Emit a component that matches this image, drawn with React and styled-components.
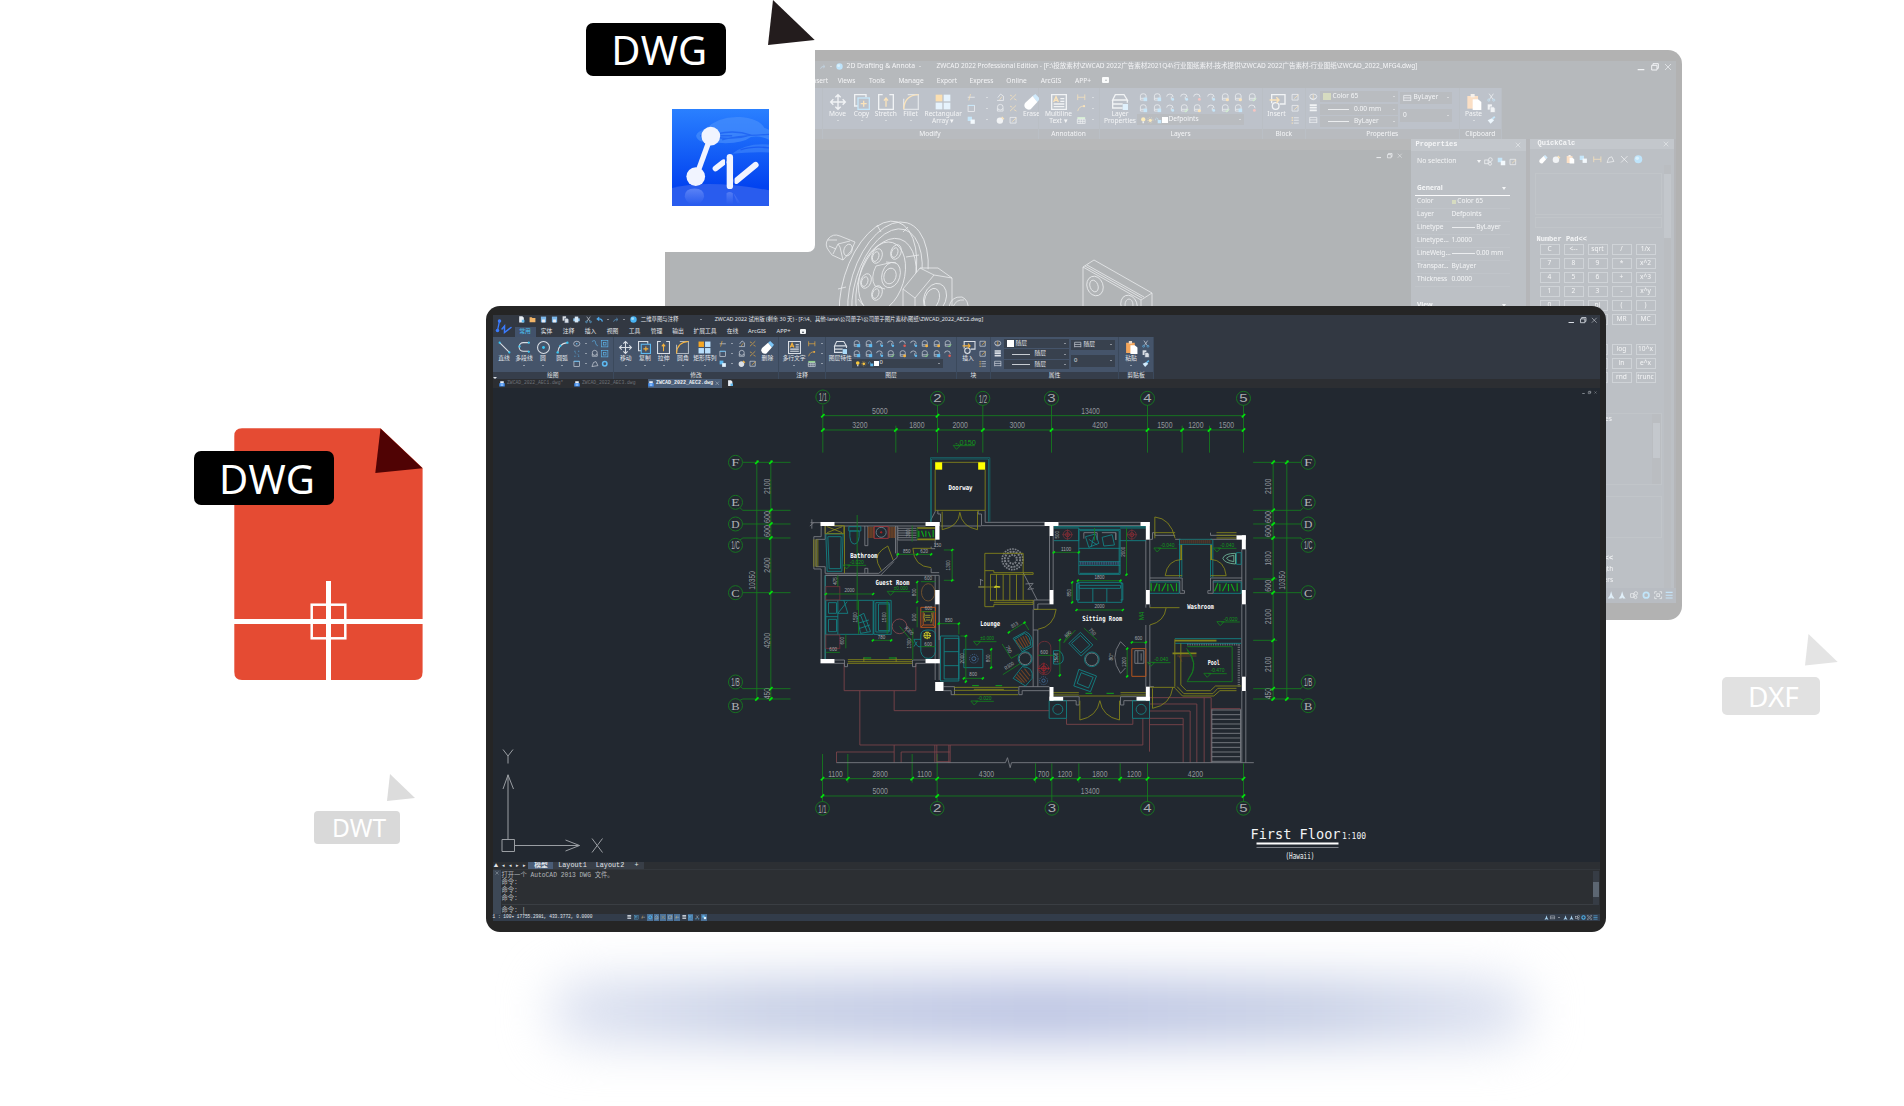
import React from "react";
import styled, { createGlobalStyle } from "styled-components";

const Global = createGlobalStyle`
  * { box-sizing: border-box; }
  html, body { margin: 0; padding: 0; background: #fff; }
`;

const UI = `"Noto Sans", "Noto Sans CJK SC", sans-serif`;
const MONO = `"Liberation Mono", "Noto Sans CJK SC", monospace`;
const PLAN = `"DejaVu Sans Mono", monospace`;

/* ---------- scene ---------- */
const Scene = styled.main`
  position: relative;
  width: 1904px;
  height: 1106px;
  overflow: hidden;
  background: #fff;
  font-family: ${UI};
`;
const Placed = styled.div`
  position: absolute;
  left: ${(p) => p.$x}px;
  top: ${(p) => p.$y}px;
`;
const Tag = styled.div`
  width: ${(p) => p.$w}px;
  height: ${(p) => p.$h}px;
  border-radius: ${(p) => p.$r}px;
  background: ${(p) => p.$bg};
  padding-left: ${(p) => p.$pad}px;
  color: #fff;
  font: 400 ${(p) => p.$size}px/${(p) => p.$h + 1}px "Noto Sans", sans-serif;
  letter-spacing: ${(p) => p.$ls || 0}px;
  white-space: nowrap;
`;
const Glow = styled.div`
  width: 980px;
  height: 62px;
  border-radius: 30px;
  background: linear-gradient(90deg, #dfe4f2 0%, #c3cce4 22%, #b5bee0 50%, #c3cce4 78%, #dfe4f2 100%);
  filter: blur(25px);
`;
const Sheet = styled.div`
  width: 165px;
  height: 252px;
  border-radius: 0 0 7px 0;
  background: #fff;
`;
const Drawing = styled.svg`
  display: block;
  flex: none;
  overflow: ${(p) => (p.$clip ? "hidden" : "visible")};
`;

/* ---------- window ---------- */
const Frame = styled.section`
  width: ${(p) => p.$w}px;
  height: ${(p) => p.$h}px;
  padding: ${(p) => p.$pad};
  border-radius: 14px;
  background: #252525;
  opacity: ${(p) => p.$fade || 1};
  overflow: hidden;
`;
const Screen = styled.div`
  height: 100%;
  display: flex;
  flex-direction: column;
  background: #323842;
  color: #e2e5e9;
  font-size: ${(p) => p.$fs}px;
  line-height: 1;
`;
const Row = styled.div`
  display: flex;
  align-items: center;
  flex: none;
  height: ${(p) => p.$h}px;
  padding-left: ${(p) => p.$pl || 0}px;
  padding-right: ${(p) => p.$pr || 0}px;
  padding-bottom: ${(p) => p.$pb || 0}px;
  gap: ${(p) => p.$gap || 0}px;
  background: ${(p) => p.$bg || "transparent"};
  white-space: nowrap;
`;
const Head = styled.div`
  display: flex;
  flex: none;
  height: ${(p) => p.$h}px;
`;
const HeadRows = styled.div`
  flex: 1;
  min-width: 0;
`;
const Cell = styled.span`
  flex: none;
  width: ${(p) => (p.$w ? p.$w + "px" : "auto")};
  text-align: ${(p) => p.$a || "left"};
  font-size: ${(p) => (p.$fs ? p.$fs + "px" : "inherit")};
  white-space: nowrap;
`;
const Spring = styled.span`
  flex: 1;
`;
const MenuTab = styled.span`
  flex: none;
  display: flex;
  align-items: center;
  justify-content: center;
  height: 100%;
  padding-top: ${(p) => p.$pt}px;
  width: ${(p) => p.$w}px;
  color: ${(p) => (p.$on ? "#4cc3f5" : "inherit")};
  background: ${(p) => (p.$on ? "#42526b" : "transparent")};
  white-space: nowrap;
`;

/* ---------- ribbon ---------- */
const RibbonBar = styled.div`
  display: flex;
  flex: none;
`;
const GroupBox = styled.div`
  width: ${(p) => p.$w}px;
  flex: none;
  border-right: 1px solid #3b495c;
`;
const GroupBody = styled.div`
  display: flex;
  height: ${(p) => p.$h}px;
  padding-left: ${(p) => p.$pl}px;
  background: #45546a;
`;
const GroupLabel = styled.div`
  display: flex;
  align-items: center;
  justify-content: center;
  height: ${(p) => p.$h}px;
  padding-top: 1.5px;
  background: #363e4b;
  white-space: nowrap;
`;
const BigBox = styled.div`
  width: ${(p) => p.$w}px;
  flex: none;
  display: flex;
  flex-direction: column;
  align-items: center;
  padding-top: ${(p) => p.$pt}px;
  gap: ${(p) => p.$g}px;
  line-height: 1.02;
  text-align: center;
  white-space: pre;
`;
const BigText = styled.div`
  display: flex;
  justify-content: center;
  width: 10px;
`;
const IconGrid = styled.div`
  flex: none;
  display: grid;
  grid-template-columns: ${(p) => p.$cols};
  grid-auto-rows: ${(p) => p.$row}px;
  justify-items: center;
  align-items: center;
  align-content: start;
  padding-top: ${(p) => p.$pt}px;
`;
const Stack = styled.div`
  flex: none;
  display: flex;
  flex-direction: column;
  gap: ${(p) => p.$gap || 0}px;
  padding-top: ${(p) => p.$pt || 0}px;
  margin-right: ${(p) => p.$mr || 0}px;
`;
const Select = styled.div`
  display: flex;
  align-items: center;
  gap: ${(p) => p.$gap || 2}px;
  width: ${(p) => p.$w}px;
  height: ${(p) => p.$h}px;
  padding: 0 3px;
  background: #38414e;
  white-space: nowrap;
`;
const Swatch = styled.i`
  flex: none;
  width: ${(p) => p.$s}px;
  height: ${(p) => p.$s}px;
  background: ${(p) => p.$c};
`;
const Rule = styled.i`
  flex: none;
  width: ${(p) => p.$w}px;
  height: 1px;
  background: #c7ccd2;
`;
const Caret = styled.i`
  flex: none;
  width: 0;
  height: 0;
  border: ${(p) => p.$s || 1.5}px solid transparent;
  border-top: ${(p) => (p.$s || 1.5) * 1.2}px solid #dfe3e8;
  border-bottom: 0;
`;
const Fold = styled.i`
  flex: none;
  display: flex;
  align-items: center;
  justify-content: center;
  width: ${(p) => p.$s}px;
  height: ${(p) => p.$s - 1}px;
  margin-top: ${(p) => p.$mt || 0}px;
  background: #f2f4f6;
  border-radius: 1px;

  &::after {
    content: "";
    border: 1.5px solid transparent;
    border-top: 0;
    border-bottom: 2px solid #3a414c;
  }
`;

const W = "#d9dee5";
const B = "#5db9f0";
const O = "#f5b23c";
const sheetPath = "M4 15V8Q4 2 12 2T20 8V20H4V15H20";
const shapes = {
  line: <g><path d="M3 3L21 21" stroke={W} /><circle cx="3" cy="3" r="2" fill="#36c6f4" /><circle cx="21" cy="21" r="2" fill="#36c6f4" /></g>,
  poly: <g><path d="M21 3H10A8 8 0 0 0 10 19H20" stroke={W} /><circle cx="20" cy="3" r="2" fill="#36c6f4" /><circle cx="20" cy="20" r="2" fill="#36c6f4" /><circle cx="3" cy="10" r="2" fill="#36c6f4" /></g>,
  circle: <g><circle cx="12" cy="12" r="11" stroke={W} /><circle cx="12" cy="12" r="2.6" fill="#36c6f4" /></g>,
  arc: <g><path d="M3 22Q4 5 21 3" stroke={W} /><circle cx="3" cy="21" r="2.2" fill="#36c6f4" /><circle cx="21" cy="3" r="2.2" fill="#36c6f4" /><circle cx="8" cy="9" r="2" fill="#36c6f4" /></g>,
  move: <path d="M12 1V23M1 12H23M8 5L12 1L16 5M8 19L12 23L16 19M5 8L1 12L5 16M19 8L23 12L19 16" stroke={W} />,
  copy: <g><path d="M6 18H1V1H18V5" stroke={W} /><rect x="6" y="6" width="17" height="17" stroke={B} /><path d="M14.500 10V19M10 14.500H19" stroke={O} /></g>,
  stretch: <g><path d="M1 7V1H7M17 1H23V7M1 7V23H23V7" stroke={W} /><path d="M12 19V7M9 10L12 6L15 10" stroke={O} /></g>,
  fillet: <g><path d="M1 23V7M7 1H23V23H1" stroke={W} opacity=".7" /><path d="M1 23Q2 2 23 1" stroke={O} /></g>,
  array: <g><rect x="1" y="1" width="10" height="10" fill="#f5a623" /><rect x="13" y="1" width="10" height="10" fill="#b9defa" /><rect x="1" y="13" width="10" height="10" fill="#b9defa" /><rect x="13" y="13" width="10" height="10" fill="#b9defa" /></g>,
  erase: <g><path d="M13 3L17 0L24 7L20 12Z" fill="#7cc6f8" /><path d="M13 3L20 12L10 23Q6 25 2 21Q-1 17 2 13Z" fill="#fff" /></g>,
  mtext: <g><path d="M1 1H23V23H1Z" stroke={W} /><path d="M4 12L7.500 4L11 12M5 9.500H10" stroke={O} /><path d="M14 7H20M14 11H20M4 15H20M4 19H20" stroke={W} /></g>,
  layers: <g stroke={W}><path d="M5 1H18L23 9H1Z" /><path d="M1 9V15H16M1 15V21H16M23 9V13" /><rect x="16" y="15" width="8" height="9" fill="#a9dafa" stroke="none" /></g>,
  insert: <g><path d="M4 14V1H24V15H16" stroke={W} /><circle cx="10" cy="18" r="5" stroke={W} /><path d="M1 9H15M11 5L15 9L11 13" stroke={O} /></g>,
  paste: <g><path d="M2 3H18V22H2Z" fill="#f4a55b" /><rect x="7" y="0" width="6" height="5" fill="#e8d8c8" /><path d="M10 8H18L23 12V24H10Z" fill="#fff" /></g>,
  s0: <g><ellipse cx="12" cy="12" rx="10" ry="8" stroke={W} /><circle cx="12" cy="12" r="2.500" fill={B} /></g>,
  s1: <path d="M3 5Q14 -2 14 7T22 19" stroke={B} />,
  s2: <g><rect x="2" y="2" width="20" height="20" stroke={B} /><rect x="8" y="8" width="8" height="8" stroke={B} /></g>,
  s3: <path d="M4 4H8M16 4H20M12 12H12.500M4 20H8M16 20H20M6 8L9 10M15 14L18 16" stroke={B} />,
  s4: <g><circle cx="12" cy="9" r="8" stroke={W} /><path d="M4 12V20H20V12" stroke={W} /></g>,
  s5: <path d="M3 21L8 8L16 5L22 18Z" stroke={W} />,
  s6: <circle cx="12" cy="12" r="7" stroke={B} strokeWidth="5" />,
  s7: <g><path d="M2 12H22" stroke={W} /><path d="M10 3L5 21" stroke={O} /></g>,
  s8: <g><path d="M3 21H21V9L13 3L5 13" stroke={W} /><path d="M10 19L17 10" stroke={O} /></g>,
  s9: <g><rect x="2" y="2" width="12" height="12" fill={B} /><rect x="10" y="10" width="12" height="12" fill="#dff0fc" /></g>,
  s10: <g><circle cx="11" cy="13" r="9" fill={W} /><path d="M16 3L22 9" stroke={O} strokeWidth="4" /></g>,
  s11: <path d="M3 20L20 4M3 6L9 9M14 16L21 20" stroke={O} />,
  box: <g><rect x="3" y="4" width="18" height="17" stroke={W} /><path d="M3 4H21" stroke={B} strokeWidth="3" /></g>,
  dimh: <path d="M2 4V20M22 4V20M2 12H22" stroke={O} />,
  leader: <g><path d="M2 20Q6 5 20 6" stroke={O} /><circle cx="20" cy="6" r="3" fill={O} /></g>,
  table: <g><rect x="1" y="3" width="22" height="6" fill="#8fd08a" /><path d="M1 9H23V21H1ZM1 15H23M9 9V21M16 9V21" stroke={W} /></g>,
  lay0: <g><path d={sheetPath} stroke={W} /><rect x="13" y="13" width="10" height="10" fill={B} /></g>,
  lay1: <g><path d={sheetPath} stroke={W} /><path d="M13 19L16 22L23 14" stroke="#79cf74" strokeWidth="3" /></g>,
  lay2: <g><path d="M2 10Q2 3 11 3T20 12M15 10V18" stroke={W} /><circle cx="19" cy="18" r="4" fill={B} /></g>,
  lay3: <g><path d="M2 10Q2 3 11 3T20 12" stroke={W} /><circle cx="18" cy="18" r="4" fill="#e65a50" /></g>,
  lay4: <g><path d={sheetPath} stroke={W} /><circle cx="18" cy="19" r="4.500" fill={O} /></g>,
  cut: <g><path d="M6 2L17 18M18 2L7 18" stroke={W} /><circle cx="5" cy="20" r="3" stroke={B} /><circle cx="19" cy="20" r="3" stroke={B} /></g>,
  pages: <g fill={W}><rect x="2" y="1" width="12" height="15" /><path d="M9 8H18L23 12V24H9Z" stroke="#45546a" /></g>,
  brush: <g><path d="M2 12L14 6L20 12L10 22Z" fill="#cfeafd" /><path d="M15 8L22 2" stroke={B} strokeWidth="5" /></g>,
  wheel: <g stroke={W}><ellipse cx="12" cy="10" rx="10" ry="7" /><path d="M3 14Q12 24 21 14" /><path d="M12 4V16" stroke={O} /></g>,
  bars: <path d="M2 3H22M2 10H22M2 18H22" stroke={W} strokeWidth="5" />,
  dash: <path d="M2 4H22M2 11H22M2 18H22M2 4V20M22 4V20" stroke={W} />,
  list: <g><path d="M8 5H22M8 12H22M8 20H22" stroke={W} /><path d="M2 5H5M2 12H5M2 20H5" stroke={O} strokeWidth="4" /></g>,
  edit: <g><path d="M3 4H20V20H3Z" stroke={W} /><path d="M9 16L21 5" stroke={O} /></g>,
  page: <g><path d="M4 1H15L20 6V22H4Z" fill="#e8edf3" /><rect x="13" y="13" width="9" height="9" fill={B} /></g>,
  folder: <path d="M2 4H9L12 7H22V21H2Z" fill="#f2b568" />,
  disk: <g><rect x="3" y="2" width="18" height="20" fill="#7db8ea" /><rect x="7" y="12" width="10" height="10" fill="#e8edf3" /></g>,
  dwg: <g><path d="M5 1H19V12H5Z" fill="#e8f1fb" /><path d="M1 9H23V22H1Z" fill="#3f8df0" /><path d="M7 16H17" stroke="#fff" strokeWidth="3" /></g>,
  print: <g><rect x="1" y="8" width="22" height="10" fill="#8cc6f0" /><rect x="6" y="2" width="12" height="20" fill="#d5e6f5" /></g>,
  undo: <path d="M22 19Q20 8 6 10M11 4L4 10L11 16" stroke="#4fa8e8" strokeWidth="4" />,
  redo: <path d="M2 19Q4 8 18 10M13 4L20 10L13 16" stroke="#4f7fa4" strokeWidth="4" />,
  globe: <g><circle cx="12" cy="12" r="11" fill="#48b4f4" /><circle cx="9" cy="9" r="5" fill="#9cdbfb" /></g>,
  bulb: <g><circle cx="12" cy="9" r="8" fill="#f8c93c" /><rect x="9" y="16" width="6" height="7" fill="#c7ccd2" /></g>,
  sun: <g><circle cx="12" cy="12" r="6" fill="#f6c341" /><circle cx="12" cy="12" r="10" stroke="#f6c341" strokeDasharray="3 4" /></g>,
  unlock: <g><path d="M2 12V7Q6 0 11 7V12" stroke={B} /><rect x="10" y="11" width="13" height="12" fill={B} /></g>,
  min: <path d="M2 20H22" stroke={W} strokeWidth="4" />,
  max: <g stroke={W} strokeWidth="3"><path d="M6 7V2H22V16H18" /><path d="M2 7H18V21H2Z" /></g>,
  close: <path d="M3 3L21 21M21 3L3 21" stroke={W} />,
  person: <path d="M12 1L16 14L22 22H14L12 18L10 22H2L8 14Z" fill="#a9d3f0" />,
  gear: <circle cx="12" cy="12" r="8" stroke="#4fb4ee" strokeWidth="5" />,
  expand: <path d="M2 8V2H8M16 2H22V8M22 16V22H16M8 22H2V16M8 8H16V16H8Z" stroke={W} />,
  menu: <path d="M2 4H22M2 12H22M2 20H22" stroke="#5cb4ee" strokeWidth="3" />,
  links: <g stroke={W}><rect x="2" y="8" width="9" height="10" /><circle cx="17" cy="7" r="5" /><circle cx="16" cy="18" r="4" /></g>,
};
const Icon = ({ n, s }) => (
  <Drawing width={s} height={s} viewBox="0 0 24 24" fill="none" strokeWidth="2">
    {shapes[n]}
  </Drawing>
);

const Big = ({ w, n, t, v, caret }) => (
  <BigBox $w={w} $pt={v.bigTop} $g={v.bigGap}>
    <Icon n={n} s={v.big} />
    {t && <BigText>{t}</BigText>}
    {caret && <Caret />}
  </BigBox>
);
const Smalls = ({ cols, list, v }) => (
  <IconGrid $cols={cols} $row={v.row} $pt={v.rowTop}>
    {list.map((n, i) => (n === "v" ? <Caret key={i} $s={1.2} /> : <Icon key={i} n={n} s={v.small} />))}
  </IconGrid>
);
const Group = ({ w, pl = 0, label, v, children }) => (
  <GroupBox $w={w}>
    <GroupBody $h={v.body} $pl={pl}>{children}</GroupBody>
    <GroupLabel $h={v.label}>{label}</GroupLabel>
  </GroupBox>
);
const modifySmalls = ["s7", "v", "s8", "s11", "box", "v", "s4", "s11", "s9", "v", "s10", "edit"];
const drawSmalls = ["s0", "v", "s1", "s2", "s3", "v", "s4", "s2", "box", "v", "s5", "s6"];
const layerSmalls = ["lay0", "lay0", "lay2", "lay2", "lay3", "lay2", "lay4", "lay4", "lay1", "lay0", "lay0", "lay2", "lay1", "lay4", "lay2", "lay1", "lay0", "lay3"];

const Ribbon = ({ v, t, x }) => (
  <RibbonBar>
    <Group w={x.draw[0]} pl={x.draw[1]} label={t.draw} v={v}>
      {x.drawBig.map((w, i) => (
        <Big key={i} w={w} n={["line", "poly", "circle", "arc"][i]} t={t.drawBig[i]} v={v} caret={i > 0} />
      ))}
      <Smalls cols={x.drawCols} list={drawSmalls} v={v} />
    </Group>
    <Group w={x.mod[0]} pl={x.mod[1]} label={t.mod} v={v}>
      {x.modBig.map((w, i) => (
        <Big key={i} w={w} n={["move", "copy", "stretch", "fillet", "array"][i]} t={t.modBig[i]} v={v} caret={!t.modBig[i].includes("\n")} />
      ))}
      <Smalls cols={x.modCols} list={modifySmalls} v={v} />
      <Big w={x.erase} n="erase" t={t.erase} v={v} />
    </Group>
    <Group w={x.ann[0]} pl={x.ann[1]} label={t.ann} v={v}>
      <Big w={x.annBig} n="mtext" t={t.mtext} v={v} caret={!t.mtext.includes("\n")} />
      <Smalls cols={x.annCols} list={["dimh", "v", "leader", "v", "table", "v"]} v={v} />
    </Group>
    <Group w={x.lay[0]} pl={x.lay[1]} label={t.lay} v={v}>
      <Big w={x.layBig} n="layers" t={t.layBig} v={v} />
      <Stack>
        <Smalls cols={x.layCols} list={layerSmalls} v={v} />
        <Select $w={x.laySel} $h={v.sel} $gap={1}>
          <Icon n="bulb" s={v.small - 2} />
          <Icon n="sun" s={v.small - 2} />
          <Icon n="unlock" s={v.small - 2} />
          <Swatch $s={v.small - 3} $c="#fff" />
          <span>{t.layer}</span>
          <Spring />
          <Caret />
        </Select>
      </Stack>
    </Group>
    <Group w={x.blk[0]} pl={x.blk[1]} label={t.blk} v={v}>
      <Big w={x.blkBig} n="insert" t={t.insert} v={v} />
      <Smalls cols={x.blkCols} list={["edit", "edit", "list"]} v={v} />
    </Group>
    <Group w={x.prop[0]} pl={x.prop[1]} label={t.prop} v={v}>
      <Smalls cols={x.propCols} list={["wheel", "bars", "dash"]} v={v} />
      <Stack $pt={v.selTop} $mr={2} $gap={v.selGap}>
        <Select $w={x.propSel} $h={v.sel}>
          <Swatch $s={v.small - 1} $c={t.swatch} />
          <span>{t.color}</span>
          <Spring />
          <Caret />
        </Select>
        {[t.weight, t.by].map((s, i) => (
          <Select key={i} $w={x.propSel} $h={v.sel} $gap={5}>
            <i />
            <Rule $w={x.propSel * 0.27} />
            <span>{s}</span>
            <Spring />
            <Caret />
          </Select>
        ))}
      </Stack>
      <Stack $pt={v.selTop + 1} $gap={5}>
        <Select $w={x.propSel2} $h={v.sel + 0.5}>
          <Icon n="dash" s={v.small} />
          <span>{t.by}</span>
          <Spring />
          <Caret />
        </Select>
        <Select $w={x.propSel2} $h={v.sel + 2}>
          <span>0</span>
          <Spring />
          <Caret />
        </Select>
      </Stack>
    </Group>
    <Group w={x.clip[0]} pl={x.clip[1]} label={t.clip} v={v}>
      <Big w={x.clipBig} n="paste" t={t.paste} v={v} caret />
      <Smalls cols={x.clipCols} list={["cut", "pages", "brush"]} v={v} />
    </Group>
  </RibbonBar>
);

const frontV = { body: 35, label: 7.5, big: 13, bigTop: 4, bigGap: 2.6, small: 7.5, row: 9.8, rowTop: 2.5, sel: 9.6, selTop: 2.4, selGap: 0.8 };
const frontX = {
  draw: [121.5, 1.5], drawBig: [20, 20, 18, 20], drawCols: "10px 8px 9px 12px",
  mod: [165, 2], modBig: [19.4, 19, 18.5, 20, 24], modCols: "12px 7px 11px 12px", erase: 17,
  ann: [47, 4], annBig: 22, annCols: "14px 5px",
  lay: [131, 3], layBig: 22.6, layCols: "repeat(9, 11.3px)", laySel: 91,
  blk: [34, 2], blkBig: 18, blkCols: "12px",
  prop: [128, 1], propCols: "12px", propSel: 65, propSel2: 44,
  clip: [35, 3], clipBig: 18, clipCols: "12px",
};
const frontT = {
  draw: "绘图", drawBig: ["直线", "多段线", "圆", "圆弧"],
  mod: "修改", modBig: ["移动", "复制", "拉伸", "圆角", "矩形阵列"], erase: "删除",
  ann: "注释", mtext: "多行文字", lay: "图层", layBig: "图层特性", layer: "0",
  blk: "块", insert: "插入", prop: "属性", swatch: "#fff", color: "随层", weight: "随层", by: "随层",
  clip: "剪贴板", paste: "粘贴",
};
const backV = { body: 41, label: 10, big: 16, bigTop: 5.5, bigGap: 1.8, small: 8.5, row: 11.4, rowTop: 3.5, sel: 11, selTop: 3, selGap: 1.5 };
const backX = {
  draw: [153, 40], drawBig: [16, 16, 16, 16], drawCols: "10px 8px 10px 14px",
  mod: [216, 3], modBig: [24, 24, 24.5, 25, 40.5], modCols: "16px 14px 13px 14px", erase: 22,
  ann: [61, 5], annBig: 30, annCols: "16px 6px",
  lay: [163, 4], layBig: 33, layCols: "repeat(9, 13.6px)", laySel: 107,
  blk: [43.5, 3], blkBig: 22, blkCols: "15px",
  prop: [153.5, 0], propCols: "14px", propSel: 78, propSel2: 52,
  clip: [42.5, 4], clipBig: 20, clipCols: "16px",
};
const backT = {
  draw: "", drawBig: ["", "", "", ""],
  mod: "Modify", modBig: ["Move", "Copy", "Stretch", "Fillet", "Rectangular\nArray ▾"], erase: "Erase",
  ann: "Annotation", mtext: "Multiline\nText ▾", lay: "Layers", layBig: "Layer\nProperties", layer: "Defpoints",
  blk: "Block", insert: "Insert", prop: "Properties", swatch: "#8c9a4c", color: "Color 65", weight: "0.00  mm", by: "ByLayer",
  clip: "Clipboard", paste: "Paste",
};

/* ---------- side palettes ---------- */
const Work = styled.div`
  flex: 1;
  min-height: 0;
  display: flex;
  background: #2e3238;
`;
const BackCanvas = styled.div`
  flex: none;
  width: 741px;
  background: #222a30;
`;
const Palette = styled.aside`
  flex: none;
  width: ${(p) => p.$w}px;
  margin-right: 4px;
  background: #434e5b;
  display: flex;
  flex-direction: column;
`;
const PaletteTitle = styled.div`
  display: flex;
  align-items: center;
  justify-content: space-between;
  height: 11.5px;
  padding: 0 5px 0 ${(p) => p.$pl}px;
  background: #56616f;
  font: 700 7px/1 "Liberation Mono", monospace;
`;
const PropRow = styled.div`
  display: flex;
  align-items: center;
  height: 13px;
  width: 95px;
  margin-left: 4px;
  padding-left: 2.5px;
  border-bottom: 1px solid ${(p) => (p.$strong ? "#f4f6f8" : "#4e5967")};
  font-weight: ${(p) => (p.$strong ? 700 : 400)};
  color: #e0e4e9;
  white-space: nowrap;
`;
const Keys = styled.div`
  display: grid;
  grid-template-columns: repeat(5, 20px);
  grid-auto-rows: 11px;
  gap: 3px 4px;
  margin: ${(p) => p.$m};
`;
const Key = styled.span`
  display: flex;
  align-items: center;
  justify-content: center;
  border: 1px solid #78828e;
`;
const CalcBody = styled.div`
  display: flex;
  flex: 1;
`;
const CalcMain = styled.div`
  width: 134px;
  flex: none;
`;
const Track = styled.div`
  width: 7px;
  margin-top: 16px;
  padding-top: 9px;
  background: #3b4450;
`;
const Thumb = styled.div`
  height: 64px;
  background: #56616f;
`;
const Field = styled.div`
  display: flex;
  height: ${(p) => p.$h}px;
  width: 127px;
  margin: ${(p) => p.$m};
  padding-left: ${(p) => p.$pl || 0}px;
  border: 1px solid #505b68;
`;
const FieldBar = styled.div`
  width: 9px;
  margin-left: auto;
  padding: 9px 1px 0;
  background: #3b4450;

  &::after {
    content: "";
    display: block;
    height: 35px;
    background: #5a6573;
  }
`;
const FieldText = styled.span`
  padding-top: 2px;
`;
const CalcHead = styled.div`
  font: 700 7px/1 "Liberation Mono", monospace;
  padding-left: ${(p) => p.$pl}px;
  margin-top: ${(p) => p.$mt}px;
`;
const CalcLine = styled.div`
  height: 11px;
  padding-left: ${(p) => p.$pl}px;
`;

const MachineParts = () => (
  <Drawing $clip width={741} height={200} viewBox="670 162 741 200" fill="none" stroke="#c6cbd0" strokeWidth=".8">
    <g>
      <ellipse cx="878" cy="286" rx="35" ry="67" transform="rotate(17 878 286)" />
      <ellipse cx="888" cy="286" rx="37" ry="66" transform="rotate(17 888 286)" />
      <ellipse cx="887" cy="287" rx="32" ry="60" transform="rotate(17 887 287)" />
      <ellipse cx="886" cy="285" rx="28" ry="48" transform="rotate(17 886 285)" />
      <ellipse cx="882" cy="277" rx="22" ry="36" transform="rotate(17 882 277)" />
      <ellipse cx="891" cy="275" rx="9" ry="13" transform="rotate(17 891 275)" />
      <ellipse cx="890" cy="276" rx="6" ry="8" transform="rotate(17 890 276)" />
      <path d="M889 263L876 266Q870 278 875 286L885 289M896 263L886 262" />
      {[[877, 256], [896, 252], [866, 281], [877, 293]].map(([x, y]) => (
        <g key={x + "-" + y}>
          <ellipse cx={x} cy={y} rx="5" ry="7.500" transform={`rotate(20 ${x} ${y})`} />
          <ellipse cx={x - 1} cy={y + 1} rx="3" ry="5" transform={`rotate(20 ${x} ${y})`} />
        </g>
      ))}
      <path d="M877 225L881 232M908 227L903 232M838 289L846 287M906 257L919 255M863 305L858 299" />
    </g>
    <g>
      <path d="M829 251Q824 245 828 239Q833 233 840 236L855 242L851 251L843 260L832 255ZM833 254L838 244L850 241M843 260L840 247L838 244M829 246L836 249M828 240L837 240" />
      <ellipse cx="848" cy="250" rx="4" ry="6" transform="rotate(20 848 250)" />
    </g>
    <g>
      <path d="M903 289L920 268L934 270L952 278V307H903Z" fill="#222a30" stroke="none" />
      <path d="M903 289L920 268H938L952 278V307M903 289L915 298L934 275L952 278M934 275L920 268M915 298V307M903 289V307" />
      <ellipse cx="935" cy="298" rx="11" ry="15" transform="rotate(20 935 298)" />
      <ellipse cx="932" cy="299" rx="7" ry="11" transform="rotate(20 932 299)" />
      <path d="M949 307Q951 296 962 297Q969 300 968 310M953 307Q956 299 964 300" />
    </g>
    <g>
      <path d="M1083 320V267L1094 260L1152 293V320M1083 267L1141 300V320M1141 300L1152 293M1085 266L1142 298M1087 265L1144 297" />
      <ellipse cx="1095" cy="286" rx="8" ry="10" transform="rotate(-20 1095 286)" />
      <ellipse cx="1094" cy="286" rx="4" ry="6" transform="rotate(-20 1094 286)" />
      <ellipse cx="1129" cy="305" rx="8" ry="10" transform="rotate(-20 1129 305)" />
      <ellipse cx="1129" cy="305" rx="4" ry="6" />
    </g>
  </Drawing>
);

const BackWindow = () => (
  <Frame $w={1017.5} $h={570} $pad="11px 6px 16.500px 5px" $fade={0.35}>
    <Screen $fs={6.6}>
      <Head $h={27.5}>
        <HeadRows>
          <Row $h={12} $pl={150} $gap={4}>
            <Icon n="redo" s={6} />
            <Caret />
            <Icon n="globe" s={7} />
            <Cell $w={68} $fs={6.8}>2D Drafting &amp; Annota</Cell>
            <Caret />
            <Cell $w={8} />
            <Cell $fs={6.53}>ZWCAD 2022 Professional Edition - [F:\投放素材\ZWCAD 2022广告素材2021Q4\行业图纸素材-技术提供\ZWCAD 2022广告素材-行业图纸\ZWCAD_2022_MFG4.dwg]</Cell>
            <Spring />
            <Row $h={12} $gap={5.5} $pr={4}>
              <Icon n="min" s={8} />
              <Icon n="max" s={8} />
              <Icon n="close" s={8} />
            </Row>
          </Row>
          <Row $h={15.5} $pl={137.5}>
            {[["Insert", 24], ["Views", 31], ["Tools", 30], ["Manage", 38], ["Export", 34], ["Express", 35], ["Online", 35], ["ArcGIS", 34], ["APP+", 30]].map(([s, w]) => (
              <MenuTab key={s} $w={w} $pt={3}>{s}</MenuTab>
            ))}
            <Cell $w={4} />
            <Fold $s={7} />
          </Row>
        </HeadRows>
      </Head>
      <Ribbon v={backV} t={backT} x={backX} />
      <Work>
        <BackCanvas>
          <Row $h={11} $bg="#33363a" />
          <Row $h={12} $gap={5}>
            <Spring />
            <Icon n="min" s={5.5} />
            <Icon n="max" s={5.5} />
            <Icon n="close" s={5.5} />
            <Cell $w={3} />
          </Row>
          <MachineParts />
        </BackCanvas>
        <Palette $w={115}>
          <PaletteTitle $pl={5}>Properties<Icon n="close" s={6} /></PaletteTitle>
          <Row $h={22} $pl={6.5} $gap={3.5}>
            <Cell $w={56} $fs={6.8}>No selection</Cell>
            <Caret $s={2.5} />
            <Icon n="links" s={9} />
            <Icon n="s9" s={9} />
            <Icon n="edit" s={8} />
          </Row>
          <Row $h={10} />
          <PropRow $strong><Cell $w={85}>General</Cell><Caret $s={2.5} /></PropRow>
          {[["Color", "Color 65"], ["Layer", "Defpoints"], ["Linetype", "ByLayer"], ["Linetype...", "1.0000"], ["LineWeig...", "0.00 mm"], ["Transpar...", "ByLayer"], ["Thickness", "0.0000"]].map(([a, b], i) => (
            <PropRow key={a}>
              <Cell $w={34.5}>{a}</Cell>
              {i === 0 && <Swatch $s={4} $c="#8c9a4c" />}
              {(i === 2 || i === 4) && <Rule $w={23} />}
              <Cell $w={34}>{i === 0 || i === 2 || i === 4 ? "\u00a0" : ""}{b}</Cell>
            </PropRow>
          ))}
          <Row $h={13} />
          <PropRow $strong><Cell $w={85}>View</Cell><Caret $s={2.5} /></PropRow>
        </Palette>
        <Palette $w={144}>
          <PaletteTitle $pl={8}>QuickCalc<Icon n="close" s={6} /></PaletteTitle>
          <CalcBody>
            <CalcMain>
              <Row $h={22} $pl={9} $gap={5}>
                {["erase", "s10", "paste", "s9", "dimh", "s5", "close", "globe"].map((n) => <Icon key={n} n={n} s={8.6} />)}
              </Row>
              <Field $h={42} $m="2px 0 0 5px" />
              <Field $h={11} $m="2px 0 0 5px" />
              <CalcHead $pl={7} $mt={8}>Number Pad&lt;&lt;</CalcHead>
              <Keys $m="1.500px 0 0 10px">
                {["C", "<--", "sqrt", "/", "1/x", "7", "8", "9", "*", "x^2", "4", "5", "6", "+", "x^3", "1", "2", "3", "-", "x^y", "0", ".", "pi", "(", ")", "=", "MS", "M+", "MR", "MC"].map((k, i) => <Key key={i}>{k}</Key>)}
              </Keys>
              <CalcHead $pl={7} $mt={7}>Scientific&lt;&lt;</CalcHead>
              <Keys $m="5px 0 0 10px">
                {["sin", "cos", "tan", "log", "10^x", "asin", "acos", "atan", "ln", "e^x", "r2d", "d2r", "abs", "rnd", "trunc"].map((k) => <Key key={k}>{k}</Key>)}
              </Keys>
              <CalcHead $pl={7} $mt={14}>Variables&lt;&lt;</CalcHead>
              <Field $h={72} $m="9px 0 0 5px" $pl={24}>
                <FieldText>Sample variables</FieldText>
                <FieldBar />
              </Field>
              <Field $h={42} $m="11px 0 0 5px" />
              <CalcHead $pl={8} $mt={17}>Units Conversion&lt;&lt;</CalcHead>
              <Row $h={4} />
              <CalcLine $pl={62}>Length</CalcLine>
              <CalcLine $pl={62}>Meters</CalcLine>
            </CalcMain>
            <Track><Thumb /></Track>
          </CalcBody>
        </Palette>
      </Work>
      <Row $h={15} $bg="#364352" $gap={3.4} $pr={2.5}>
        <Spring />
        {["person", "person", "links", "gear", "expand", "menu"].map((n, i) => <Icon key={i} n={n} s={8.3} />)}
      </Row>
    </Screen>
  </Frame>
);

/* ---------- floor plan ---------- */
const Pen = styled.g`
  fill: ${(p) => p.$fill || "none"};
  stroke: ${(p) => p.$c};
  stroke-width: ${(p) => p.$w || 2.6};
`;
const PlanText = styled.text`
  fill: ${(p) => p.$c};
  font-family: ${(p) => p.$f || `"Liberation Sans", sans-serif`};
  font-size: ${(p) => p.$s}px;
  font-weight: ${(p) => p.$b || 400};
  text-anchor: middle;
`;
const T = ({ x, y, s = 25, w, r, c = "#92979c", f, b, children }) => (
  <PlanText $c={c} $s={s} $f={f} $b={b} x={x} y={y + s * 0.36} textLength={w} lengthAdjust="spacingAndGlyphs" transform={r ? `rotate(${r} ${x} ${y})` : undefined}>
    {children}
  </PlanText>
);
const GREEN = "#157d1e";
const CYAN = "#138487";
const YEL = "#86851a";
const GRAY = "#7c8087";
const RED = "#7d444a";
const MID = { c: "#fff", f: PLAN, b: 700, s: 21 };

const topX = [367, 586, 711, 847, 1053, 1341, 1445, 1527, 1629];
const botX = [366, 442, 635, 710, 1005, 1054, 1135, 1259, 1341, 1629];
const leftY = [247, 391, 432, 474, 638, 926, 957];
const rightY = [247, 391, 432, 474, 597, 638, 781, 926, 957];
const rowMarks = [["F", 247], ["E", 367], ["D", 432], ["1/C", 496], ["C", 638], ["1/B", 906], ["B", 977]];
const smallDims = [
  ["850", 619, 514], ["620", 671, 514], ["600", 683, 595], ["2000", 447, 631], ["600", 684, 685], ["600", 683, 791], ["780", 543, 771], ["600", 398, 806],
  ["850", 745, 721], ["800", 818, 883], ["600", 1031, 815], ["R300", 626, 752, 45], ["R300", 926, 857, -35], ["813", 942, 734, -30], ["750", 925, 808, 62],
  ["300", 624, 459, -90], ["1300", 743, 556, -90], ["475", 403, 603, -90], ["800", 641, 637, -90], ["900", 641, 712, -90], ["1500", 465, 712, -90], ["1500", 550, 712, -90],
  ["1300", 626, 790, -90], ["600", 424, 782, -90], ["2000", 785, 835, -90], ["800", 862, 835, -90], ["1100", 1097, 506], ["1800", 1197, 591], ["2000", 1197, 678],
  ["850", 1107, 638, -90], ["2000", 1267, 515, -90], ["500", 1070, 464, -90], ["1500", 1066, 833, -90], ["690", 1102, 762, -45], ["750", 1176, 755, 48], ["600", 1314, 775],
  ["1200", 1270, 846, -90], ["150", 711, 494], ["80°", 1232, 830, -90],
];
const levels = [["-.0150", 795, 188, 22], ["-0.020", 469, 547, 14], ["±0.000", 601, 626, 14], ["±0.000", 860, 776, 14], ["-0.020", 852, 955, 14], ["-0.040", 1401, 496, 14], ["-0.040", 1580, 496, 14], ["-0.020", 1590, 717, 14], ["-0.040", 1382, 839, 14], ["-0.470", 1551, 872, 14]];

const tick = (x, y) => `M${x - 5} ${y + 5}L${x + 5} ${y - 5}`;
const column = [
  [360, 426, 42, 12], [675, 426, 42, 12], [704, 426, 13, 53], [704, 630, 13, 43], [360, 837, 42, 13], [675, 837, 43, 13], [704, 906, 25, 27],
  [1032, 426, 42, 12], [1047, 426, 12, 42], [1047, 630, 12, 43], [1047, 921, 12, 41], [1047, 950, 41, 12], [1320, 426, 27, 12], [1336, 426, 12, 53],
  [1336, 630, 12, 43], [1336, 920, 12, 42], [1308, 950, 40, 12], [1608, 466, 28, 13], [1624, 466, 12, 42], [1624, 630, 12, 43], [1624, 890, 12, 43],
];

const FloorPlan = () => (
  <Drawing $clip width={1107.5} height={474} viewBox="492.5 388 1107.5 474">
    <g transform="translate(700 380) scale(.33333)">
      <Pen $c={GREEN}>
        <path d="M367 107H1629M367 150H1629" />
        <path d={topX.map((x, i) => `M${x} ${[1, 6, 7].includes(i) ? 137 : 76}V218`).join("")} />
        <path d="M169 240V962M211 240V962M1718 240V962M1759 240V962" />
        <path d={leftY.map((y) => `M127 ${y}H270`).join("")} />
        <path d={rightY.map((y) => `M1658 ${y}H${y === 597 || y === 781 ? 1730 : 1802}`).join("")} />
        <path d="M118 383L127 391M118 480L127 474M118 918L127 926M118 961L127 957M1809 383L1800 391M1809 480L1800 474M1809 918L1800 926M1809 961L1800 957" />
        <path d="M366 1196H1629M366 1248H1629" />
        <path d={botX.map((x) => `M${x} ${x < 800 ? 1122 : 1150}V${[366, 710, 1054, 1341, 1629].includes(x) ? 1265 : 1208}`).join("")} />
        {[[367, 51], [711, 55], [847, 55], [1053, 55], [1341, 55], [1629, 55]].map(([x, y]) => <circle key={x} cx={x} cy={y} r="21" />)}
        {[366, 710, 1054, 1341, 1629].map((x) => <circle key={x} cx={x} cy="1285" r="20.500" />)}
        {rowMarks.map(([s, y]) => <g key={s}><circle cx="105" cy={y} r="21" /><circle cx="1823" cy={y} r="21" /></g>)}
      </Pen>
      <Pen $c="#00e40c" $w={5}>
        <path d={topX.map((x) => tick(x, 150)).join("") + [367, 711, 1629].map((x) => tick(x, 107)).join("")} />
        <path d={leftY.map((y) => tick(211, y)).join("") + rightY.map((y) => tick(1718, y)).join("")} />
        <path d={[169, 1759].map((x) => tick(x, 247) + tick(x, 957)).join("")} />
        <path d={botX.map((x) => tick(x, 1196)).join("") + [366, 710, 1629].map((x) => tick(x, 1248)).join("")} />
      </Pen>

      {[["5000", 538, 92, 47], ["13400", 1170, 92, 56], ["3200", 478, 135], ["1800", 649, 135], ["2000", 779, 135], ["3000", 950, 135], ["4200", 1198, 135], ["1500", 1393, 135], ["1200", 1486, 135], ["1500", 1578, 135],
        ["1100", 405, 1181, 43], ["2800", 539, 1181], ["1100", 672, 1181, 43], ["4300", 858, 1181], ["700", 1029, 1181, 34], ["1200", 1093, 1181, 43], ["1800", 1198, 1181], ["1200", 1301, 1181, 43], ["4200", 1485, 1181], ["5000", 539, 1233], ["13400", 1169, 1233, 56]].map(([s, x, y, w], i) => (
        <T key={i} x={x} y={y} w={w || 46}>{s}</T>
      ))}
      {[["2100", 199, 319], ["600", 199, 411, 36], ["600", 199, 453, 36], ["2400", 199, 555], ["4200", 199, 782], ["450", 199, 941, 34], ["10350", 156, 601, 56],
        ["2100", 1703, 319], ["600", 1703, 411, 36], ["600", 1703, 453, 36], ["1800", 1703, 535, 43], ["600", 1703, 617, 36], ["2100", 1703, 710], ["2100", 1703, 853], ["450", 1703, 941, 34], ["10350", 1744, 601, 56]].map(([s, x, y, w], i) => (
        <T key={i} x={x} y={y} w={w || 46} r={-90}>{s}</T>
      ))}
      {[["1/1", 367, 51], ["2", 711, 55], ["1/2", 847, 55], ["3", 1053, 55], ["4", 1341, 55], ["5", 1629, 55], ["1/1", 366, 1285], ["2", 710, 1285], ["3", 1054, 1285], ["4", 1341, 1285], ["5", 1629, 1285]].map(([s, x, y], i) => (
        <T key={i} x={x} y={y} s={s.length > 1 ? 35 : 32} w={25} c="#a9adb1">{s}</T>
      ))}
      {rowMarks.map(([s, y]) => (
        <g key={s}>
          <T x={105} y={y} s={s.length > 1 ? 33 : 34} w={25} c="#b0b4b8" f={s.length > 1 ? undefined : `"Liberation Serif", serif`}>{s}</T>
          <T x={1823} y={y} s={s.length > 1 ? 33 : 34} w={25} c="#b0b4b8" f={s.length > 1 ? undefined : `"Liberation Serif", serif`}>{s}</T>
        </g>
      ))}

      <Pen $c={RED}>
        <path d="M431 850V932H646V850M478 932V1095H1327V1015M581 932V992H1046M408 1148V1116H581M581 1095V1148M602 1148V1116H748M703 1095V1148M709 1095V1148M745 1095V1148M749 1095V1148M710 1145H748" />
        <path d="M1347 953H1532M1347 972H1489V1148M1347 993H1469V1148M1347 1015H1448V1148M1347 1034H1448M1511 953V1148M1532 953V1148M1532 986H1620M1347 962V1115M1098 1015V1033H1297V1015" />
      </Pen>
      <Pen $c={GRAY}>
        <path d="M408 1148H915L921 1133L929 1163L933 1148H1660M1624 933V1148M1636 933V1148" />
        <path d={Array.from({ length: 12 }, (_, i) => `M1534 ${990 + i * 14}H1620`).join("") + "M1534 988V1148M1620 988V1148"} />
        <path d="M328 438L340 428M334 418V446M330 428H675M402 438H675M362 438V470H340V567H362V840M374 438V478H347V560H374V580H535L590 532V438M374 586H540L580 545M493 438V497H502V438M493 580V565H502V580M374 586V837M585 438V520M374 586H716V780M692 565V578H716M704 478V500M692 500V506H704M704 586V900M716 673V900M402 840H432V860H441V850M402 850H432M646 850V860H636V840H675M646 850H675M691 426V420L704 395V391M720 426V402H712V391M833 391V402H843V437H1032M854 391V427H1032M720 438H842" />
        <path d="M1047 468V630M1058 468V630M1059 660H1000V688H1012V672H1047M998 688V750V920M1012 750V920M998 750H1012M729 932H752V944H762V920H729M955 944V920H1047M955 944H965V932H1047M1074 427H1320M1074 437H1320M1336 479V630M1348 479V630M1336 673V683M1348 673V683M1336 735V920M1348 735V920M1348 478H1356V458H1363V466H1424M1530 458V466H1608M1530 478H1608M1424 478H1440M1624 508V630M1636 508V630M1624 673V890M1636 673V890M1348 594H1445V632H1452V640H1438V602H1348M1624 594H1530V632H1522V640H1538V602H1624M1348 920H1360M1088 950H1136V975H1127V962H1088M1308 950H1260V975H1270V962H1308" />
        <path d="M592 440V480H650M592 445H648M592 452H648M592 459H648M592 466H648M592 473H648" />
        <path d="M968 578L1010 660M975 612L998 610L982 628L1000 626M833 621H852M838 598L848 602M840 598V616" />
        <circle cx="936" cy="538" r="31" strokeDasharray="5 3" strokeWidth="5" />
        <circle cx="936" cy="538" r="23" strokeDasharray="6 3" strokeWidth="6" />
        <circle cx="936" cy="538" r="13" strokeDasharray="5 3" strokeWidth="6" />
        <path d="M1460 793H1610M1615 793V920" strokeDasharray="4 3" strokeWidth="7" opacity=".7" />
        <path d="M1260 785Q1226 832 1260 880M1260 785L1275 800M1260 880L1275 864M1303 812H1330V850H1303ZM1312 812V850M1322 820V842" />
        <circle cx="974" cy="836" r="18" /><circle cx="1174" cy="838" r="19" />
        <path d="M1150 458H1190V480M1204 458H1246V480M1150 458V476M1246 458V480" />
      </Pen>
      <Pen $c={CYAN}>
        <path d="M690 425V233H868V425M693 425V237H864V425" strokeWidth="1.8" />
        <path d="M376 462H428L424 574H380ZM382 470H422L420 566H386ZM445 440H481V453H445ZM448 453Q446 492 462 492Q478 492 476 453ZM374 586V840" />
        <path d="M376 661H518V763H376ZM412 661V763M376 710H412M412 700L440 665M412 700H442L430 661M384 668H408V700H384ZM384 718H408V755H384ZM470 710L490 700L510 755L480 760ZM480 705L500 755M472 730L505 720M478 745L508 735" />
        <path d="M520 661H572V763H520ZM526 668H566V756H526ZM534 672H566V752H534Z" />
        <path d="M720 768H775V903H720ZM731 775H775V897H731ZM731 815H775M731 857H775M790 808H847V863H790ZM661 765Q661 750 683 750T705 765V815Q700 835 683 835T661 815ZM661 778H640Q650 805 661 800M650 785L640 800" />
        <path d="M938 775L975 755Q1000 765 995 800L965 815ZM938 895L965 860Q1000 860 995 895L975 918ZM942 778L972 760Q992 768 990 796L967 808Z" />
        <circle cx="974" cy="836" r="21" /><circle cx="1174" cy="838" r="22" />
        <path d="M1060 440H1340M1060 444H1135V482H1060M1135 448H1259V583H1135ZM1138 452H1256V580H1138M1135 505H1259M1135 545H1259M1135 556H1259M1259 444H1336M1259 482H1336M1155 470L1185 462L1195 490L1165 502ZM1205 472L1235 464L1242 495L1210 498ZM1165 478L1190 495M1180 470L1172 500" />
        <path d="M1132 607H1264V667H1132ZM1128 610H1136V660H1128ZM1260 610H1267V660H1260M1136 616H1260V625H1136ZM1177 625V667M1219 625V667" />
        <path d="M1105 790L1140 757L1177 795L1142 828ZM1113 790L1140 766L1168 795L1141 819ZM1135 868L1188 888L1170 935L1120 918ZM1142 878L1178 892L1164 924L1130 910Z" />
        <path d="M1046 962H1098V1015H1046ZM1296 962H1347V1015H1296ZM1059 812H1075Q1090 820 1088 840Q1085 855 1059 852ZM1059 820Q1080 832 1059 845" />
        <circle cx="1072" cy="988" r="15" /><circle cx="1322" cy="988" r="15" />
        <path d="M1435 478H1535M1435 493H1535M1437 480V592M1444 493V592M1530 493V592M1537 480V592M1423 776H1622M1424 790H1622M1348 606H1436V640H1348M1538 606H1622V640H1538M1608 518H1622V553H1608Z" />
      </Pen>
      <Pen $c="#6fb79a"><path d="M1567 535Q1572 520 1605 520V552Q1572 550 1567 535M1578 535Q1582 528 1600 526V545Q1582 543 1578 535" /></Pen>
      <Pen $c="#3f658f" $w={3}>
        <circle cx="820" cy="836" r="13" strokeDasharray="3 3" /><circle cx="820" cy="836" r="6" /><circle cx="1029" cy="902" r="12" strokeDasharray="3 3" /><circle cx="1029" cy="902" r="5" />
        <path d="M1138 550H1256" strokeWidth="9" strokeDasharray="5 2" opacity=".7" />
      </Pen>
      <Pen $c={YEL}>
        <path d="M704 269V391H854V269M704 247H854M725 395V449Q775 440 778 397M831 395V449Q783 440 778 397M340 478V560M346 478V560M352 478V560M374 437H430V461H374ZM380 440L425 458M380 458L425 440M432 437V580" />
        <path d="M853 680V520H968V578M853 572H880V578H998V583H870V663M853 680H880V673H998V661H870M880 667H998" />
        <path d={[888, 908, 928, 948, 968].map((x) => `M${x} 583V661`).join("")} />
        <path d="M834 621H900M562 498L578 540M562 498Q520 520 532 550L543 572M637 505H692M637 505Q640 560 692 563M1000 688H1067Q1060 740 1012 748" />
        <path d="M442 839H635M442 845H635M442 850H635M490 832V846M587 832V846M760 922H953M760 931H953M760 944H953M820 928H910M1058 938H1135M1058 945H1135M1260 938H1336M1260 945H1336M1136 948H1260M1138 962V1020Q1190 1010 1198 962Q1206 1010 1257 1020V962" />
        <path d="M1363 475V411Q1410 415 1424 475M1424 458H1363M1548 458H1608M1548 466H1608M1548 474H1608M1530 538Q1572 540 1577 587H1530M1445 538Q1400 540 1394 587H1445M1437 683H1397M1348 683H1397Q1392 725 1348 735M1356 985Q1410 975 1417 922M1356 985V925M1348 922H1424" />
        <path d="M1423 778V920M1441 790V915L1458 932H1530L1545 918H1622M1424 925L1446 948H1540L1558 932H1608M1430 920L1450 941H1537L1552 925H1608" />
        <circle cx="680" cy="766" r="9" stroke="#d9d62a" strokeWidth="5" strokeDasharray="4 2" />
        <path d="M672 766H689M680 757V775" stroke="#d9d62a" />
        <path d="M882 621H898L884 618V624Z" stroke="#d9d62a" />
      </Pen>
      <Pen $c={YEL} $w={5}><path d="M1423 782H1548M1416 820H1488M1442 495V540M1532 495V540M650 444H704M650 478H704" /></Pen>
      <Pen $c="#6e4326" $w={2.4}>
        <path d="M1440 485H1532" strokeWidth="11" strokeDasharray="4 2" opacity=".7" />
        <path d="M504 440V474M509 440V474M514 440V474M519 440V474M567 440V474M572 440V474M577 440V474M582 440V474" strokeWidth="4" />
        <path d="M946 780L962 808M953 776L970 804M960 772L977 801M967 769L983 798M975 767L988 792M945 890L965 908M950 883L972 908M956 877L979 905M962 870L985 898M972 866L989 888" strokeWidth="3.500" />
        <ellipse cx="683" cy="637" rx="20" ry="26" stroke="#80592c" />
        <path d="M661 682H705V742H661ZM668 695H698V735H668ZM661 742L668 735M705 742L698 735M1294 806H1336V889H1294Z" stroke="#b5531d" strokeWidth="3" />
        <path d="M672 700Q668 712 674 726M694 698Q698 712 691 728M674 712H690M674 706L690 706M676 720H690" stroke="#a8a42a" strokeWidth="2.500" />
        <path d="M1430 828H1488M1436 828L1444 845" />
      </Pen>
      <Pen $c="#713038">
        <rect x="376" y="620" width="42" height="40" /><rect x="376" y="765" width="42" height="40" />
        <circle cx="597" cy="739" r="22" stroke="#87494f" /><rect x="521" y="440" width="42" height="35" stroke="#a8343b" />
        <rect x="1013" y="784" width="38" height="100" rx="18" />
        <circle cx="1030" cy="865" r="14" stroke="#a3262e" strokeDasharray="5 3" /><circle cx="1030" cy="865" r="7" stroke="#a3262e" /><path d="M1012 865H1048M1030 848V882" stroke="#a3262e" />
        <circle cx="542" cy="457" r="2" stroke="#d22" /><circle cx="1101" cy="464" r="6" stroke="#a3262e" /><circle cx="1294" cy="464" r="6" stroke="#a3262e" />
        <circle cx="1101" cy="464" r="13" /><circle cx="1294" cy="464" r="13" />
        <path d="M1085 464H1117M1101 448V480M1278 464H1310M1294 448V480" />
      </Pen>
      <Pen $c="#6b8590"><circle cx="542" cy="457" r="15" /></Pen>
      <Pen $c={GREEN}>
        <path d="M470 405V690M376 642H518M474 661V762M560 661V762M592 523H692M755 510V601M730 510H762M730 601H762M650 606V666M650 680V742M661 605H705M661 695H705M661 800H705M715 731H775M775 731V763M796 768V905M780 768H802M790 895H847M872 808V863M517 781H572M436 763V805M376 817H418M637 745V840M597 739L640 790M412 586V620" />
        <path d="M925 757L972 728L985 750M905 792L932 835L955 822M907 884L960 850M1012 826H1060M1078 780V886M1060 517H1135M1182 444V482M1278 444V584M1132 602H1260M1115 607V667M1128 690H1267M1105 757L1090 788L1125 750M1150 744L1190 780M1294 787H1336M1280 806V889M635 437V485M650 445V478" />
        <path d="M1460 800H1595V905H1460L1475 880Q1490 850 1460 810M1458 805Q1500 850 1462 900" />
        {levels.map(([s, x, y, h], i) => <path key={i} d={`M${x - 28} ${y + 9}H${x + 28}M${x - 48 + h / 2} ${y + 8}L${x - 38 + h / 2} ${y + 20}L${x - 26 + h / 2} ${y + 8}Z`} />)}
      </Pen>
      <Pen $c="#00d80c" $w={5}>
        <path d={[[376, 642], [518, 642], [592, 523], [650, 523], [692, 523], [755, 510], [755, 601], [650, 606], [650, 666], [715, 731], [775, 731], [796, 768], [796, 905], [790, 895], [847, 895], [872, 808], [872, 863], [517, 781], [572, 781], [1060, 517], [1135, 517], [1132, 602], [1260, 602], [1128, 690], [1267, 690], [1115, 607], [1115, 667], [1278, 584], [1294, 787], [1336, 787], [1280, 806], [1280, 889], [1078, 780], [1078, 886], [972, 728], [925, 757]].map(([x, y]) => `M${x - 3} ${y + 3}L${x + 3} ${y - 3}`).join("")} />
      </Pen>
      <Pen $c="#0fa81a" $w={3.5}>
        <path d="M655 452V472M663 452L670 470M676 452V470M684 455L690 472M698 450V472M1352 610V634M1360 634L1370 610M1376 612V634M1384 634L1396 610M1402 612V634M1410 612L1420 634M1428 610V634M1542 634L1552 610M1558 612V634M1566 634L1578 610M1584 612V634M1592 612L1602 634M1610 610V634" />
        <path d="M490 834H512M565 834H587M815 917H835M885 917H905M1155 940H1175M1218 940H1240" strokeWidth="3" />
      </Pen>
      <Pen $c="none" $fill="#fff">{column.map((c, i) => <rect key={i} x={c[0]} y={c[1]} width={c[2]} height={c[3]} />)}</Pen>
      <Pen $c="none" $fill="#ffff00"><rect x="704" y="247" width="21" height="22" /><rect x="833" y="247" width="21" height="22" /></Pen>

      {smallDims.map(([s, x, y, r], i) => <T key={i} x={x} y={y} r={r} s={16} w={s.length * 7.6} c="#a3a8ac">{s}</T>)}
      {levels.map(([s, x, y, h], i) => <T key={i} x={x} y={y} s={h} w={h > 20 ? 62 : 42} c="#129a1c">{s}</T>)}
      <T x={1323} y={708} r={-90} s={20} w={26} c="#129a1c">M4</T>
      <T x={780} y={321} w={72} {...MID}>Doorway</T>
      <T x={490} y={526} w={82} {...MID}>Bathroom</T>
      <T x={576} y={606} w={102} {...MID}>Guest Room</T>
      <T x={869} y={729} w={60} {...MID}>Lounge</T>
      <T x={1205} y={715} w={120} {...MID}>Sitting Room</T>
      <T x={1500} y={679} w={80} {...MID}>Washroom</T>
      <T x={1540} y={848} w={36} {...MID}>Pool</T>
    </g>
    <T x={1295} y={834} s={14.5} w={90} c="#f2f4f5" f={PLAN}>First Floor</T>
    <T x={1353.5} y={835.5} s={8.5} w={24} c="#f2f4f5" f={PLAN}>1:100</T>
    <T x={1299.5} y={856} s={8.5} w={29} c="#f2f4f5" f={PLAN}>(Hawaii)</T>
    <Pen $c="#fff" $w={2}><path d="M1256 843.500H1338" /></Pen>
    <Pen $c="#7c8087" $w={1}><path d="M1256 847.500H1338" /></Pen>
    <Pen $c="#9a9ea3" $w={1}>
      <path d="M501.500 839.500H514V851.500H501.500ZM507.500 839.500V774.500M502.500 789L507.500 775L513 789M514 845.500H579M565 840L579 845.500L565 851" />
      <path d="M502.500 749.500L507.500 756L512.500 749.500M507.500 756V763.500M591.500 838.500L602 852.500M602 838.500L591.500 852.500" />
    </Pen>
  </Drawing>
);

/* ---------- front window ---------- */
const FileTab = styled.span`
  flex: none;
  display: flex;
  align-items: center;
  gap: 2px;
  height: 9px;
  width: ${(p) => p.$w}px;
  color: ${(p) => (p.$on ? "#f0f2f5" : "#6c7178")};
  background: ${(p) => (p.$on ? "#4a5d77" : "transparent")};
  font: ${(p) => (p.$on ? 700 : 400)} ${(p) => (p.$on ? 5 : 4.7)}px/1 "Liberation Mono", monospace;
  white-space: nowrap;
`;
const Canvas = styled.div`
  flex: none;
  height: 474px;
  background: #222830;
  position: relative;
`;
const CanvasButtons = styled.div`
  position: absolute;
  top: 3px;
  right: 3px;
  display: flex;
  gap: 3px;
`;
const LayoutTab = styled.span`
  display: flex;
  align-items: center;
  justify-content: center;
  height: 7px;
  width: ${(p) => p.$w}px;
  background: ${(p) => (p.$on ? "#4a5d77" : "#383e47")};
  font: ${(p) => (p.$on ? 700 : 400)} 6.8px/1 ${MONO};
`;
const Console = styled.div`
  display: flex;
  flex: none;
  height: 44.5px;
  background: #2c2f33;
  border-top: 1px solid #33373c;
`;
const ConsoleGrip = styled.div`
  width: 8px;
  flex: none;
  padding: 1px 0 0 2px;
  background: #3d4856;
`;
const ConsoleText = styled.div`
  flex: 1;
  display: flex;
  flex-direction: column;
  padding: 1.5px 0 0 1px;
  color: #b4b8bc;
  font: 400 6.3px/7.8px ${MONO};
  white-space: pre;
`;
const ConsoleInput = styled.div`
  margin-top: 1.5px;
  padding-top: 1.5px;
  border-top: 1px solid #3a3e43;
  height: 11px;
`;
const ConsoleScroll = styled.div`
  width: 6px;
  margin: 1px 1px 9px 0;
  padding-top: 11px;
  background: #363c45;
`;
const ConsoleThumb = styled.div`
  height: 15px;
  background: #5c6672;
`;
const LogoCell = styled.div`
  width: 22px;
  padding: 4.5px 0 0 2px;
`;
const MonoText = styled.span`
  font-family: "Liberation Mono", monospace;
`;
const StatusTool = styled.span`
  display: flex;
  align-items: center;
  justify-content: center;
  width: 5.8px;
  height: 7px;
  background: ${(p) => (p.$on ? "#4b7299" : "transparent")};
`;

const FrontWindow = () => (
  <Frame $w={1120} $h={626} $pad="8.500px 6px 12px 6.500px">
    <Screen $fs={5.8}>
      <Head $h={22}>
        <LogoCell>
          <Drawing width={17} height={15} viewBox="0 0 34 30" fill="none" strokeLinecap="round">
            <path d="M9 4L5 23" stroke="#3a7bff" strokeWidth="2.500" />
            <circle cx="9" cy="4" r="3.500" fill="#3a7bff" /><circle cx="5" cy="23" r="3.500" fill="#3a7bff" />
            <path d="M14 20L19 14V27L32 17" stroke="#3a7bff" strokeWidth="3" />
          </Drawing>
        </LogoCell>
        <HeadRows>
          <Row $h={12} $pb={1.5} $pl={3} $gap={4.2}>
            {["page", "folder", "disk", "disk", "pages", "print", "cut", "undo"].map((n, i) => <Icon key={i} n={n} s={7} />)}
            <Caret $s={1} />
            <Icon n="redo" s={6} />
            <Caret $s={1} />
            <Icon n="globe" s={7} />
            <Cell $w={55} $fs={5.4}>二维草图与注释</Cell>
            <Caret />
            <Cell $w={4.5} />
            <Cell $fs={5.35}>ZWCAD 2022 试用版 (剩余 30 天) - [F:\4、其他-lane\公司册子\公司册子图片素材\图纸\ZWCAD_2022_AEC2.dwg]</Cell>
            <Spring />
            <Row $h={8} $gap={4.8} $pr={2.5}>
              <Icon n="min" s={6.5} />
              <Icon n="max" s={6.5} />
              <Icon n="close" s={6.5} />
            </Row>
          </Row>
          <Row $h={10}>
            {[["常用", 21], ["实体", 22], ["注释", 22], ["插入", 22], ["视图", 22], ["工具", 22], ["管理", 22], ["输出", 21], ["扩展工具", 33], ["在线", 22], ["ArcGIS", 27], ["APP+", 26]].map(([s, w], i) => (
              <MenuTab key={s} $w={w} $on={i === 0} $pt={1.5}>{s}</MenuTab>
            ))}
            <Cell $w={3} />
            <Fold $s={6} />
          </Row>
        </HeadRows>
      </Head>
      <Ribbon v={frontV} t={frontT} x={frontX} />
      <Row $h={9} $bg="#2c2e32">
        <Cell $w={6.5}><Caret $s={2} /></Cell>
        <FileTab $w={75}><Icon n="dwg" s={6} />ZWCAD_2022_AEC1.dwg*</FileTab>
        <FileTab $w={74}><Icon n="dwg" s={6} />ZWCAD_2022_AEC3.dwg</FileTab>
        <FileTab $w={74} $on><Icon n="dwg" s={6} />ZWCAD_2022_AEC2.dwg<Icon n="close" s={4.5} /></FileTab>
        <FileTab $w={16}>&nbsp;<Icon n="page" s={6.5} /></FileTab>
      </Row>
      <Canvas>
        <FloorPlan />
        <CanvasButtons>
          <Icon n="min" s={3} />
          <Icon n="max" s={3} />
          <Icon n="close" s={3} />
        </CanvasButtons>
      </Canvas>
      <Row $h={7} $bg="#2c2f33" $gap={0}>
        {["▲", "◂", "◂", "▸", "▸"].map((s, i) => <Cell key={i} $w={7.2} $fs={4.5} $a="center">{s}</Cell>)}
        <LayoutTab $w={25} $on>模型</LayoutTab>
        <LayoutTab $w={38}>Layout1</LayoutTab>
        <LayoutTab $w={37}>Layout2</LayoutTab>
        <LayoutTab $w={16}>+</LayoutTab>
      </Row>
      <Console>
        <ConsoleGrip><Icon n="close" s={4} /></ConsoleGrip>
        <ConsoleText>
          <span>打开一个 AutoCAD 2013 DWG 文件。</span>
          <span>命令:</span>
          <span>命令:</span>
          <span>命令:</span>
          <ConsoleInput>命令: |</ConsoleInput>
        </ConsoleText>
        <ConsoleScroll><ConsoleThumb /></ConsoleScroll>
      </Console>
      <Row $h={7} $bg="#323c4a" $gap={1}>
        <Cell $w={133} $fs={4.5}><MonoText>1 : 100▾ 17755.2981, 433.3772, 0.0000</MonoText></Cell>
        {["bars", "s2", "s7", "gear", "s8", "s11", "edit", "s7", "bars", "s2", "cut", "s9"].map((n, i) => (
          <StatusTool key={i} $on={(i > 2 && i < 8) || i === 9 || i === 11}><Icon n={n} s={4.5} /></StatusTool>
        ))}
        <Spring />
        <Icon n="person" s={5} />
        <Icon n="dash" s={5} />
        <Cell $w={1} />
        <Caret />
        <Cell $w={1} />
        {["person", "person", "links", "gear", "expand", "menu"].map((n, i) => <Icon key={i} n={n} s={5} />)}
        <Cell $w={1} />
      </Row>
    </Screen>
  </Frame>
);

/* ---------- document marks ---------- */
const RedFile = () => (
  <Drawing width={189} height={252} viewBox="234 428 189 252" fill="none">
    <path d="M242 428.300H380.500L422.600 468V672Q422.600 680 415 680H242Q234.300 680 234.300 672V436Q234.300 428.300 242 428.300Z" fill="#e54b33" />
    <path d="M380.500 428.500L422.500 468.300L375.300 473Z" fill="#500304" />
    <path d="M234 621.500H423M328.500 581V680" stroke="#fff" strokeWidth="5" />
    <rect x="311.700" y="604.700" width="33.600" height="33.600" stroke="#fff" strokeWidth="2.500" />
  </Drawing>
);
const Corner = ({ s, c }) => (
  <Drawing width={47 * s} height={45 * s} viewBox="0 0 47 45">
    <path d="M5 0L46.700 40L0 45Z" fill={c} />
  </Drawing>
);
const AppLogo = () => (
  <Drawing $clip width={97} height={97} viewBox="0 0 290 290" fill="none">
    <defs>
      <linearGradient id="sky" x1="0" y1="0" x2="0" y2="1">
        <stop offset="0" stopColor="#2a80ff" />
        <stop offset=".8" stopColor="#0243f0" />
      </linearGradient>
      <linearGradient id="fade" x1="0" y1="0" x2="0" y2="1">
        <stop offset="0" stopColor="#6f92f8" />
        <stop offset="1" stopColor="#6f92f8" stopOpacity="0" />
      </linearGradient>
    </defs>
    <rect width="290" height="290" fill="url(#sky)" />
    <path d="M72 80Q76 66 100 60Q140 20 205 24Q262 30 276 56L290 62V92Q260 78 236 84Q210 104 150 102L90 98Q74 92 72 80Z" fill="#4a90fc" opacity=".65" />
    <path d="M135 74Q190 62 236 78Q190 92 140 86M84 80H180M150 92Q190 80 290 76" stroke="#2268f4" strokeWidth="4" />
    <path d="M180 134Q220 100 290 106V130Q230 128 180 134Z" fill="#4a90fc" opacity=".5" />
    <path d="M205 122Q240 110 290 116" stroke="#1a5ef4" strokeWidth="4" />
    <path d="M0 236Q110 210 290 243V290H0Z" fill="#295cee" />
    <path d="M38 262Q38 238 67 238T96 262Q90 285 67 285T38 262Z" fill="url(#fade)" opacity=".7" />
    <path d="M163 252Q172 244 182 252V285H163ZM184 252L205 282H195Z" fill="url(#fade)" opacity=".6" />
    <path d="M116 82L72 202" stroke="#f1f4ff" strokeWidth="16" />
    <circle cx="116" cy="81" r="28" fill="#f1f4ff" /><circle cx="71" cy="202" r="28" fill="#f1f4ff" />
    <path d="M130 178L154 159" stroke="#f1f4ff" strokeWidth="17" strokeLinecap="round" />
    <path d="M173 144V230" stroke="#f1f4ff" strokeWidth="19" strokeLinecap="round" />
    <path d="M160 146V190" stroke="#0b52f4" strokeWidth="3" />
    <path d="M250 167L192 215" stroke="#f1f4ff" strokeWidth="18" strokeLinecap="round" />
    <path d="M185 195V226" stroke="#0849f1" strokeWidth="4" />
  </Drawing>
);

export default function App() {
  return (
    <Scene>
      <Global />
      <Placed $x={550} $y={980}><Glow /></Placed>
      <Placed $x={664.5} $y={49.5}><BackWindow /></Placed>
      <Placed $x={650} $y={-0.5}><Sheet /></Placed>
      <Placed $x={768} $y={0}><Corner s={1} c="#231c1d" /></Placed>
      <Placed $x={586} $y={23}><Tag $w={140} $h={53} $r={7} $bg="#000" $pad={25.3} $size={40} $ls={0.6}>DWG</Tag></Placed>
      <Placed $x={672} $y={109}><AppLogo /></Placed>
      <Placed $x={486} $y={306}><FrontWindow /></Placed>
      <Placed $x={234} $y={428}><RedFile /></Placed>
      <Placed $x={193.5} $y={451}><Tag $w={140.5} $h={54} $r={7} $bg="#000" $pad={25.5} $size={40} $ls={0.6}>DWG</Tag></Placed>
      <Placed $x={387} $y={774}><Corner s={0.6} c="#dcdcdc" /></Placed>
      <Placed $x={314} $y={811}><Tag $w={86} $h={33} $r={4} $bg="#d9d9d9" $pad={18} $size={24.5}>DWT</Tag></Placed>
      <Placed $x={1805} $y={634}><Corner s={0.7} c="#e4e4e4" /></Placed>
      <Placed $x={1722} $y={677}><Tag $w={98} $h={38} $r={5} $bg="#e1e1e1" $pad={26} $size={28}>DXF</Tag></Placed>
    </Scene>
  );
}
